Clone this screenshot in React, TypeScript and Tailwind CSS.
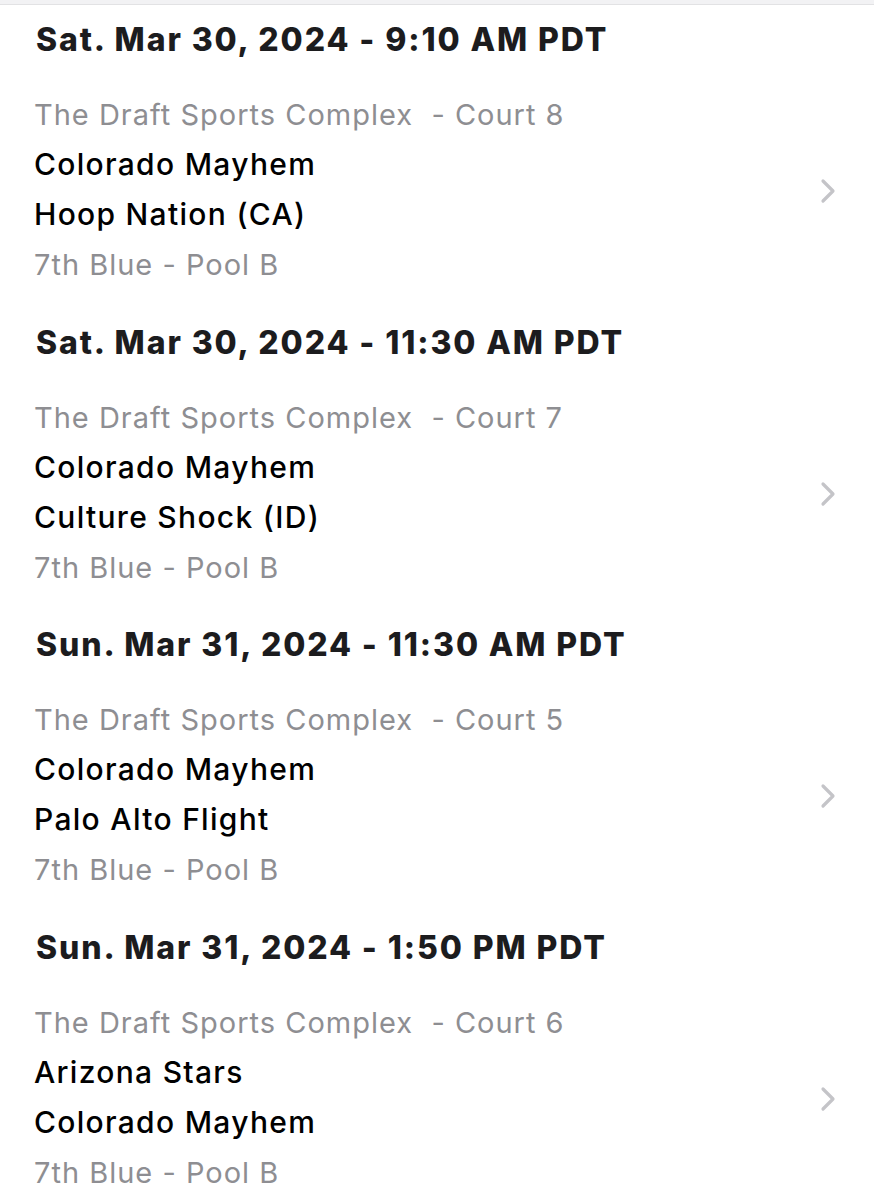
import React from "react";

type Game = { date: string; court: string; home: string; away: string; pool: string };

const games: Game[] = [
  { date: "Sat. Mar 30, 2024 - 9:10 AM PDT", court: "Court 8", home: "Colorado Mayhem", away: "Hoop Nation (CA)", pool: "7th Blue - Pool B" },
  { date: "Sat. Mar 30, 2024 - 11:30 AM PDT", court: "Court 7", home: "Colorado Mayhem", away: "Culture Shock (ID)", pool: "7th Blue - Pool B" },
  { date: "Sun. Mar 31, 2024 - 11:30 AM PDT", court: "Court 5", home: "Colorado Mayhem", away: "Palo Alto Flight", pool: "7th Blue - Pool B" },
  { date: "Sun. Mar 31, 2024 - 1:50 PM PDT", court: "Court 6", home: "Arizona Stars", away: "Colorado Mayhem", pool: "7th Blue - Pool B" },
];

function Chevron() {
  return (
    <svg width="16" height="26" viewBox="0 0 16 26" fill="none">
      <path d="M3 3 L13 13 L3 23" stroke="#c4c4c8" strokeWidth="3.2" strokeLinecap="round" strokeLinejoin="round" />
    </svg>
  );
}

export default function App() {
  return (
    <div className="relative w-[874px] h-[1200px] overflow-hidden bg-white" style={{ fontFamily: "Inter, 'Noto Sans', sans-serif" }}>
      <div className="absolute top-0 left-0 right-0 h-[5px] bg-[#f2f2f4] border-b border-[#e2e2e4]" />
      {games.map((g, i) => (
        <div key={i} className="h-[302.5px] pt-[15px]">
          <div className="h-[50px] pl-[36px] flex items-center text-[32px] font-extrabold text-[#1c1c1e] tracking-[1.9px]">
            {g.date}
          </div>
          <div className="mt-[26px] flex items-center pr-[38px]">
            <div className="flex-1 pl-[34px]">
              <div className="text-[#8e8e92] text-[29px] leading-[48px] tracking-[1px] whitespace-pre">{`The Draft Sports Complex  - ${g.court}`}</div>
              <div className="text-black font-medium text-[30px] leading-[50px] tracking-[1.3px]">{g.home}</div>
              <div className="text-black font-medium text-[30px] leading-[50px] tracking-[1.3px]">{g.away}</div>
              <div className="text-[#8e8e92] text-[29px] leading-[52px] tracking-[1px]">{g.pool}</div>
            </div>
            <Chevron />
          </div>
        </div>
      ))}
    </div>
  );
}
